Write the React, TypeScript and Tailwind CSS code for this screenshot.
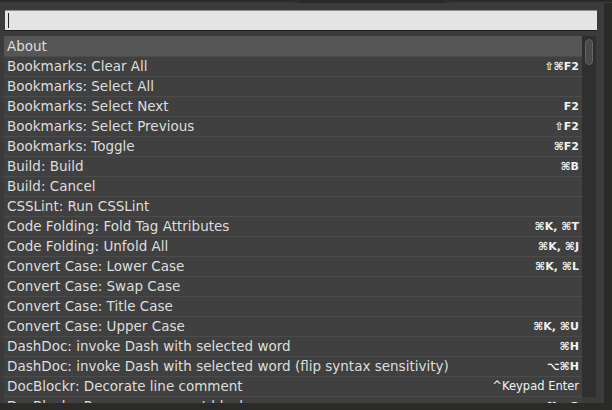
import React from 'react';

interface Command {
  label: string;
  keys?: string;
  plain?: boolean;
}

const commands: Command[] = [
  { label: 'About' },
  { label: 'Bookmarks: Clear All', keys: '⇧⌘F2' },
  { label: 'Bookmarks: Select All' },
  { label: 'Bookmarks: Select Next', keys: 'F2' },
  { label: 'Bookmarks: Select Previous', keys: '⇧F2' },
  { label: 'Bookmarks: Toggle', keys: '⌘F2' },
  { label: 'Build: Build', keys: '⌘B' },
  { label: 'Build: Cancel' },
  { label: 'CSSLint: Run CSSLint' },
  { label: 'Code Folding: Fold Tag Attributes', keys: '⌘K, ⌘T' },
  { label: 'Code Folding: Unfold All', keys: '⌘K, ⌘J' },
  { label: 'Convert Case: Lower Case', keys: '⌘K, ⌘L' },
  { label: 'Convert Case: Swap Case' },
  { label: 'Convert Case: Title Case' },
  { label: 'Convert Case: Upper Case', keys: '⌘K, ⌘U' },
  { label: 'DashDoc: invoke Dash with selected word', keys: '⌘H' },
  { label: 'DashDoc: invoke Dash with selected word (flip syntax sensitivity)', keys: '⌥⌘H' },
  { label: 'DocBlockr: Decorate line comment', keys: '^Keypad Enter', plain: true },
  { label: 'DocBlockr: Reparse comment block', keys: '⌘⌥Q' },
];

const font = { fontFamily: '"DejaVu Sans", "Liberation Sans", sans-serif' };

export default function App() {
  return (
    <div className="w-[612px] h-[410px] bg-[#2a2a26] overflow-hidden" style={font}>
      {/* tab strip */}
      <div className="h-[3px] relative">
        <svg width="612" height="3" className="absolute top-0 left-0">
          <path d="M0 2.5 H290 Q296 2.5 298 0.5 M445 0.5 Q447 2.5 452 2.5 H612" stroke="#3a3a36" strokeWidth="1" fill="none" />
        </svg>
      </div>

      <div className="w-[604px] h-[400px] bg-[#3b3b3b] flex flex-col overflow-hidden">
        {/* search box */}
        <div className="ml-[5px] mt-[7px] w-[592px] h-[21px] shrink-0 bg-[#e4e4e4] border-t border-t-[#8c8c8c] border-b border-b-[#1e1e1e] flex items-center pl-[3px]">
          <div className="w-px h-[15px] bg-[#222]" />
        </div>

        {/* results */}
        <div className="mt-[5px] ml-[4px] flex h-[367px] shrink-0 overflow-hidden">
          <div className="w-[578px] flex flex-col">
            {commands.map((c, i) => (
              <div
                key={c.label}
                className={`h-[20px] shrink-0 flex items-center justify-between pl-[3px] pr-[3px] ${
                  i === 0 ? 'bg-[#565656]' : 'bg-[#404040] border-t border-t-[#4c4c4c]'
                }`}
              >
                <span className="text-[13.5px] text-[#dedede] leading-[19px] whitespace-nowrap">{c.label}</span>
                {c.keys && (
                  <span
                    className={`text-[#f2f2f2] leading-[19px] whitespace-nowrap ${
                      c.plain ? 'text-[11.5px]' : 'text-[11px] font-bold'
                    }`}
                  >
                    {c.keys}
                  </span>
                )}
              </div>
            ))}
          </div>

          {/* scrollbar */}
          <div className="w-[14px] h-[361px] bg-[#2f2f2f] pt-[3px] flex justify-center">
            <div className="w-[8px] h-[26px] rounded-full bg-[#4a4a4a] border border-[#646464]" />
          </div>
        </div>
      </div>
    </div>
  );
}
